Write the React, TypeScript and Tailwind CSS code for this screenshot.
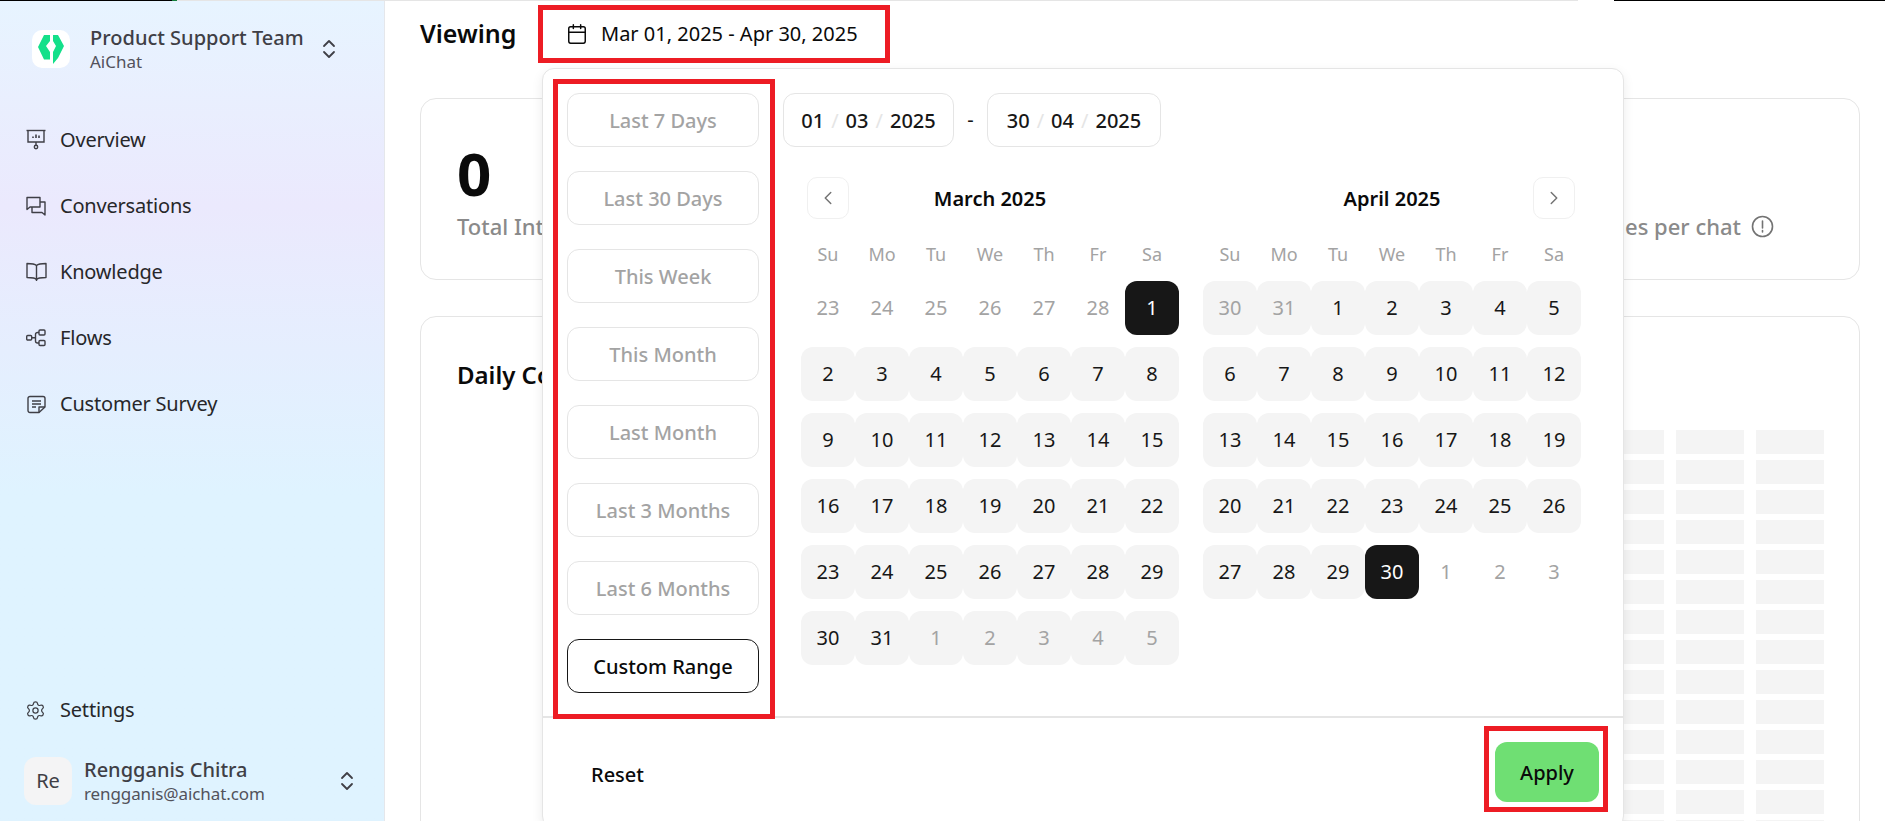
import React from 'react';
import { Calendar, ChevronLeft, ChevronRight, ChevronsUpDown, Settings } from 'lucide-react';

const presets = ['Last 7 Days', 'Last 30 Days', 'This Week', 'This Month', 'Last Month', 'Last 3 Months', 'Last 6 Months'];
const weekdays = ['Su', 'Mo', 'Tu', 'We', 'Th', 'Fr', 'Sa'];

type Day = { label: number; kind: 'off' | 'range' | 'edge' | 'dimrange' };

const range = (from: number, to: number, kind: Day['kind']): Day[] => {
  const days: Day[] = [];
  for (let i = from; i <= to; i++) days.push({ label: i, kind });
  return days;
};

const marchDays: Day[] = [
  ...range(23, 28, 'off'),
  { label: 1, kind: 'edge' },
  ...range(2, 31, 'range'),
  ...range(1, 5, 'dimrange'),
];

const aprilDays: Day[] = [
  ...range(30, 31, 'dimrange'),
  ...range(1, 29, 'range'),
  { label: 30, kind: 'edge' },
  ...range(1, 3, 'off'),
];

function OverviewIcon() {
  return (
    <svg width="20" height="22" viewBox="0 0 20 22" fill="none" stroke="#3f3f46" strokeWidth="1.4">
      <path d="M0.5 1.5h19" />
      <path d="M2 1.5v11.5h16V1.5" />
      <path d="M10 13v3" />
      <circle cx="10" cy="18" r="1.7" />
      <path d="M7 9V7.5M10 9V5.5M13 9V6.5" strokeWidth="1.6" />
    </svg>
  );
}

function ChatIcon() {
  return (
    <svg width="20" height="20" viewBox="0 0 20 20" fill="none" stroke="#3f3f46" strokeWidth="1.4" strokeLinejoin="round">
      <path d="M14 1.5H1v12l3-2.5h10z" />
      <path d="M14 6h5v13l-3-2.5H6V11" />
    </svg>
  );
}

function BookIcon() {
  return (
    <svg width="21" height="20" viewBox="0 0 21 20" fill="none" stroke="#3f3f46" strokeWidth="1.4" strokeLinejoin="round">
      <path d="M10.5 3.5C9 2 7 1.5 1 1.5v14c6 0 8.5.5 9.5 2 1-1.5 3.5-2 9.5-2v-14c-6 0-8 .5-9.5 2z" />
      <path d="M10.5 3.5V19" />
    </svg>
  );
}

function FlowIcon() {
  return (
    <svg width="20" height="18" viewBox="0 0 20 18" fill="none" stroke="#3f3f46" strokeWidth="1.4">
      <rect x="0.7" y="6.5" width="5" height="4.5" rx="1" />
      <rect x="13" y="1" width="6" height="5" rx="1" />
      <rect x="13" y="11.5" width="6" height="5" rx="1" />
      <path d="M5.7 8.7h3.8M13 3.5h-1.5a2 2 0 0 0-2 2v6.5a2 2 0 0 0 2 2H13" />
    </svg>
  );
}

function NoteIcon() {
  return (
    <svg width="19" height="19" viewBox="0 0 19 19" fill="none" stroke="#3f3f46" strokeWidth="1.4" strokeLinejoin="round">
      <path d="M12 17.5H3a2 2 0 0 1-2-2v-12a2 2 0 0 1 2-2h13a2 2 0 0 1 2 2V12z" />
      <path d="M12 17.5V12h6" />
      <path d="M5 6h9M5 9h9M5 12h4" />
    </svg>
  );
}

function Logo() {
  return (
    <div className="mt-[5px] flex h-[38px] w-[38px] items-center justify-center rounded-[10px] bg-white">
      <svg width="26" height="29" viewBox="0 0 26 29" fill="#14e08a">
        <path d="M6 0h6v6l-4 5 4 6v7.5H6L0 12z" />
        <path d="M15 0h5l6 11-6 12-5 6V17l3-6-3-5z" />
      </svg>
    </div>
  );
}

const navItems = [
  { label: 'Overview', icon: <OverviewIcon /> },
  { label: 'Conversations', icon: <ChatIcon /> },
  { label: 'Knowledge', icon: <BookIcon /> },
  { label: 'Flows', icon: <FlowIcon /> },
  { label: 'Customer Survey', icon: <NoteIcon /> },
];

function Sidebar() {
  return (
    <aside className="flex h-full w-[385px] shrink-0 flex-col border-r border-[#e5e7eb] bg-gradient-to-b from-[#e7f4ff] via-[#ebe9fd] via-25% to-[#dff3ff] to-60%">
      <div className="ml-[32px] mt-[24px] flex items-start">
        <Logo />
        <div className="ml-[20px] w-[218px]">
          <div className="text-[20px] leading-[26px] font-medium text-[#3f3f46]">Product Support Team</div>
          <div className="text-[17px] leading-[22px] text-[#52525b]">AiChat</div>
        </div>
        <ChevronsUpDown size={24} strokeWidth={1.8} className="ml-[9px] mt-[12px] text-[#3f3f46]" />
      </div>

      <nav className="mt-[47px] flex flex-col gap-[26px] pl-[25px]">
        {navItems.map((item) => (
          <div key={item.label} className="flex h-[40px] items-center">
            <div className="flex w-[22px] justify-center">{item.icon}</div>
            <span className="ml-[13px] text-[20px] tracking-[-0.2px] text-[#27272a]">{item.label}</span>
          </div>
        ))}
      </nav>

      <div className="mt-auto flex items-center pl-[25px]">
        <Settings size={21} strokeWidth={1.4} className="text-[#3f3f46]" />
        <span className="ml-[14px] text-[20px] tracking-[-0.2px] text-[#27272a]">Settings</span>
      </div>

      <div className="mb-[16px] ml-[24px] mt-[32px] flex items-center">
        <div className="flex h-[48px] w-[48px] items-center justify-center rounded-[12px] bg-[#f4f4f5] text-[20px] text-[#3f3f46]">Re</div>
        <div className="ml-[12px] w-[251px]">
          <div className="text-[20px] leading-[26px] font-medium text-[#3f3f46]">Rengganis Chitra</div>
          <div className="text-[17px] leading-[22px] tracking-[-0.1px] text-[#52525b]">rengganis@aichat.com</div>
        </div>
        <ChevronsUpDown size={24} strokeWidth={1.8} className="text-[#3f3f46]" />
      </div>
    </aside>
  );
}

function CalendarMonth({ title, days, nav }: { title: string; days: Day[]; nav: 'prev' | 'next' }) {
  return (
    <div className="w-[378px]">
      <div className="grid grid-cols-[42px_1fr_42px] items-center px-[6px]">
        {nav === 'prev' ? (
          <div className="flex h-[42px] w-[42px] items-center justify-center rounded-[10px] border border-[#f0f0f0] text-[#737373]">
            <ChevronLeft size={22} strokeWidth={1.6} />
          </div>
        ) : (
          <div />
        )}
        <div className="pt-[2px] text-center text-[20px] font-semibold text-[#0a0a0a]">{title}</div>
        {nav === 'next' ? (
          <div className="flex h-[42px] w-[42px] items-center justify-center rounded-[10px] border border-[#f0f0f0] text-[#737373]">
            <ChevronRight size={22} strokeWidth={1.6} />
          </div>
        ) : (
          <div />
        )}
      </div>

      <div className="mt-[18px] grid h-[34px] grid-cols-7 items-center text-center text-[18px] text-[#a3a3a3]">
        {weekdays.map((d) => (
          <div key={d}>{d}</div>
        ))}
      </div>

      <div className="mt-[10px] grid grid-cols-7 gap-y-[12px]">
        {days.map((d, i) => {
          let cls = 'text-[#a3a3a3]';
          if (d.kind === 'range') cls = 'bg-[#f4f4f4] text-[#171717]';
          if (d.kind === 'dimrange') cls = 'bg-[#f4f4f4] text-[#a3a3a3]';
          if (d.kind === 'edge') cls = 'bg-[#171717] text-white';
          return (
            <div key={i} className={`flex h-[54px] w-[54px] items-center justify-center rounded-[12px] text-[20px] ${cls}`}>
              {d.label}
            </div>
          );
        })}
      </div>
    </div>
  );
}

function DateField({ parts, width }: { parts: string[]; width: string }) {
  return (
    <div className={`flex h-[54px] items-center justify-center gap-[7px] rounded-[12px] border border-[#e5e5e5] pt-[2px] text-[20px] font-medium text-[#171717] ${width}`}>
      <span>{parts[0]}</span>
      <span className="font-normal text-[#e5e5e5]">/</span>
      <span>{parts[1]}</span>
      <span className="font-normal text-[#e5e5e5]">/</span>
      <span>{parts[2]}</span>
    </div>
  );
}

function DatePopover() {
  return (
    <div className="absolute left-[542px] top-[68px] h-[760px] w-[1082px] rounded-[12px] border border-[#e5e5e5] bg-white shadow-[0_4px_12px_rgba(0,0,0,0.08)]">
      <div className="flex h-[649px] border-b-2 border-[#e5e5e5] pl-[10px] pt-[10px]">
        <div className="flex h-[640px] w-[222px] shrink-0 flex-col gap-[24px] border-[5px] border-[#ed1c24] pl-[9px] pr-[11px] pt-[9px]">
          {presets.map((p) => (
            <div key={p} className="flex h-[54px] shrink-0 items-center justify-center rounded-[12px] border border-[#e5e5e5] pt-[2px] text-[20px] font-medium text-[#a3a3a3]">
              {p}
            </div>
          ))}
          <div className="flex h-[54px] shrink-0 items-center justify-center rounded-[12px] border border-[#171717] pt-[2px] text-[20px] font-medium text-[#0a0a0a]">
            Custom Range
          </div>
        </div>

        <div className="ml-[8px] pt-[14px]">
          <div className="flex items-center">
            <DateField parts={['01', '03', '2025']} width="w-[171px]" />
            <span className="w-[33px] text-center text-[20px] text-[#171717]">-</span>
            <DateField parts={['30', '04', '2025']} width="w-[174px]" />
          </div>
          <div className="ml-[18px] mt-[30px] flex gap-[24px]">
            <CalendarMonth title="March 2025" days={marchDays} nav="prev" />
            <CalendarMonth title="April 2025" days={aprilDays} nav="next" />
          </div>
        </div>
      </div>

      <div className="flex items-start justify-between pl-[48px] pr-[15px] pt-[8px]">
        <span className="mt-[34px] text-[20px] font-medium text-[#0a0a0a]">Reset</span>
        <div className="border-[5px] border-[#ed1c24] pb-[5px] pl-[6px] pr-[4px] pt-[11px]">
          <div className="flex h-[60px] w-[104px] items-center justify-center rounded-[12px] bg-[#6fdf73] pt-[2px] text-[20px] font-medium text-[#0a0a0a]">
            Apply
          </div>
        </div>
      </div>
    </div>
  );
}

function Main() {
  const rows = Array.from({ length: 14 });
  return (
    <main className="h-full flex-1 overflow-hidden pl-[35px] pr-[25px]">
      <div className="flex h-[61px] items-center pt-[4px]">
        <h1 className="w-[97px] text-[25px] font-semibold text-[#0a0a0a]">Viewing</h1>
        <div className="ml-[21px] flex h-[58px] w-[352px] items-center border-[5px] border-[#ed1c24] pl-[23px]">
          <Calendar size={22} strokeWidth={1.6} className="text-[#0a0a0a]" />
          <span className="ml-[13px] text-[20px] text-[#0a0a0a]">Mar 01, 2025 - Apr 30, 2025</span>
        </div>
      </div>

      <section className="mt-[36px] flex h-[182px] items-start justify-between rounded-[16px] border border-[#e5e5e5] pl-[36px] pr-[85px] pt-[32px]">
        <div>
          <div className="text-[60px] leading-[84px] font-bold text-[#0a0a0a]">0</div>
          <div className="mt-[-3px] text-[22px] font-medium leading-[28px] text-[#8a8a8a]">Total Interactions</div>
        </div>
        <div className="mt-[81px] flex items-center gap-[10px]">
          <span className="text-[22px] font-medium leading-[28px] text-[#8a8a8a]">Average messages per chat</span>
          <svg width="23" height="23" viewBox="0 0 23 23" fill="none" stroke="#737373" strokeWidth="1.6">
            <circle cx="11.5" cy="11.5" r="10" />
            <path d="M11.5 6v7M11.5 15.5v1.5" strokeLinecap="round" />
          </svg>
        </div>
      </section>

      <section className="mt-[36px] h-[600px] rounded-[16px] border border-[#e5e5e5] pl-[36px] pr-[35px] pt-[41px]">
        <div className="flex items-start justify-between">
          <h2 className="text-[24px] font-semibold leading-[34px] text-[#0a0a0a]">Daily Conversations</h2>
          <div className="mt-[72px] flex flex-col gap-[6px]">
            {rows.map((_, i) => (
              <div key={i} className="flex gap-[12px]">
                <div className="h-[24px] w-[68px] bg-[#f4f4f4]" />
                <div className="h-[24px] w-[68px] bg-[#f4f4f4]" />
                <div className="h-[24px] w-[68px] bg-[#f4f4f4]" />
              </div>
            ))}
          </div>
        </div>
      </section>
    </main>
  );
}

export default function App() {
  return (
    <div className="relative h-[821px] w-[1885px] overflow-hidden bg-white font-['Noto_Sans',sans-serif]">
      <div className="flex h-px">
        <div className="w-[172px] bg-black" />
        <div className="w-[5px] bg-[#15803d]" />
        <div className="w-[1401px] bg-[#e5e5e5]" />
        <div className="w-[36px] bg-white" />
        <div className="flex-1 bg-black" />
      </div>
      <div className="flex h-[820px]">
        <Sidebar />
        <Main />
      </div>
      <DatePopover />
    </div>
  );
}
